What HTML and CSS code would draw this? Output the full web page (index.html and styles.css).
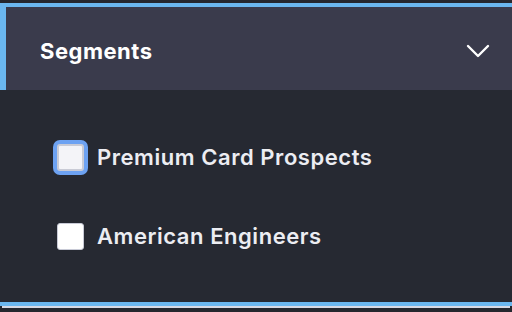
FILE: index.html
```html
<!DOCTYPE html>
<html>
<head>
	<meta charset="utf-8">
	<title>Segments</title>
	<link rel="stylesheet" href="styles.css">
</head>
<body>
	<div class="panel">
		<div class="panel-header">
			<span class="panel-title">Segments</span>
			<svg class="chevron" width="24" height="14" viewBox="0 0 24 14">
				<polyline points="2,2 12,12 22,2" fill="none" stroke="#fff" stroke-width="2.4" stroke-linecap="round" stroke-linejoin="round"/>
			</svg>
		</div>
		<div class="panel-body">
			<label class="option focused">
				<span class="box"></span>
				<span class="option-label">Premium Card Prospects</span>
			</label>
			<label class="option">
				<span class="box"></span>
				<span class="option-label">American Engineers</span>
			</label>
		</div>
	</div>
	<div class="shadow-line"></div>
</body>
</html>
```

FILE: styles.css
```css
* {
	box-sizing: border-box;
}
body {
	margin: 0;
	padding-top: 3px;
	background-color: #25272e;
	font-family: Inter, "Noto Sans", sans-serif;
}
.panel {
	border-top: solid 4px #6bb7ef;
	border-bottom: solid 4px #6bb7ef;
	background-color: #262932;
}
.panel-header {
	display: flex;
	align-items: center;
	justify-content: space-between;
	height: 83px;
	padding: 4px 22px 0 34px;
	border-left: solid 6px #6bb7ef;
	background-color: #3a3b4c;
}
.panel-title {
	color: #fff;
	font-size: 22px;
	font-weight: 700;
	letter-spacing: 0.5px;
}
.chevron {
	display: block;
}
.panel-body {
	display: flex;
	flex-direction: column;
	gap: 53px;
	height: 212px;
	padding: 54px 0 0 57px;
}
.option {
	display: flex;
	align-items: center;
	gap: 13px;
	height: 26px;
}
.box {
	width: 27px;
	height: 27px;
	border: solid 1px #c8cad6;
	border-radius: 3px;
	background-color: #fff;
}
.focused .box {
	border: solid 2px #c9cbd6;
	background-color: #f4f4f8;
	box-shadow: 0 0 0 4px #6da2f2;
}
.option-label {
	color: #ecedf2;
	font-size: 22px;
	font-weight: 600;
	letter-spacing: 0.55px;
}
.shadow-line {
	height: 2px;
	margin: 0 2px;
	background-color: #d6d9e4;
}
```
